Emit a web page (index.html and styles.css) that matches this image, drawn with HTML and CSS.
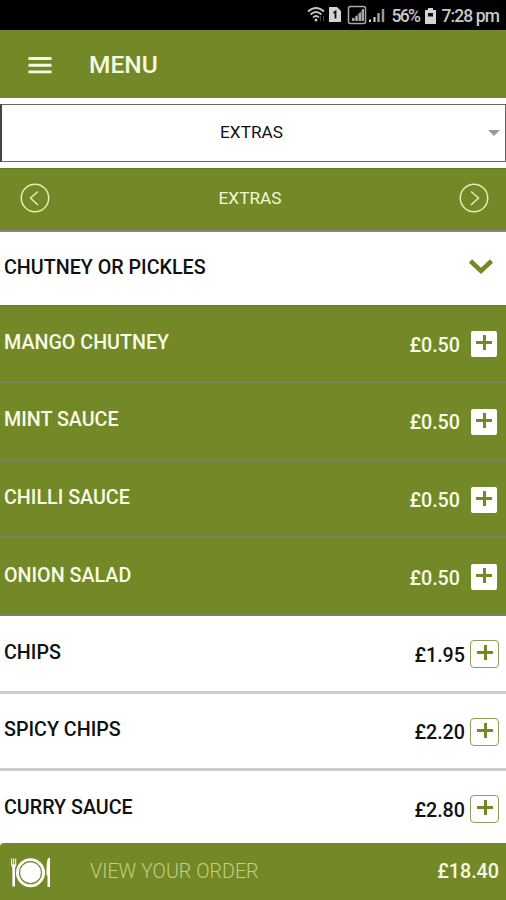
FILE: index.html
```html
<!DOCTYPE html>
<html lang="en">

<head>
    <meta charset="UTF-8">
    <meta name="viewport" content="width=device-width, initial-scale=1.0">
    <title>Menu</title>
    <link rel="stylesheet" href="styles.css">
</head>

<body>

    <div class="status-bar">
        <svg class="status-icons" width="79" height="22" viewBox="0 0 79 22">
            <!-- wifi -->
            <g fill="none" stroke="#c4c4c4" stroke-width="1.7">
                <path d="M1 7.5Q9 0.5 17 7.5"/>
                <path d="M3.5 10.5Q9 5.5 14.5 10.5"/>
                <path d="M6 13.5Q9 10.5 12 13.5"/>
            </g>
            <circle cx="9" cy="16" r="1.5" fill="#c4c4c4"/>
            <path d="M13.5 12v5M16.5 17v-5" fill="none" stroke="#444"/>
            <!-- sim -->
            <path d="M22 3h8l4 4v11h-12z" fill="#d4d4d4"/>
            <path d="M26.5 9l2-1.5v7" fill="none" stroke="#111" stroke-width="1.8"/>
            <!-- signal -->
            <rect x="41.5" y="2.5" width="17" height="17" rx="2" fill="none" stroke="#aaa" stroke-width="1.5"/>
            <path d="M44 17l12-12v12z" fill="#555"/>
            <path d="M46 17v-3M49.5 17v-5M53 17v-8M56 17v-12" stroke="#b5b5b5" stroke-width="1.8"/>
            <path d="M63 18v-2.5M67.5 18v-5" stroke="#d4d4d4" stroke-width="2"/>
            <path d="M71.5 18v-9M76 18v-13" stroke="#999" stroke-width="2.5"/>
        </svg>
        <span class="battery-text">56%</span>
        <svg class="battery" width="11" height="16" viewBox="0 0 11 16">
            <path d="M3 0h5v2h3v14h-11v-14h3z" fill="#d4d4d4"/>
            <path d="M3 5h5v3.5h-5z" fill="#111"/>
        </svg>
        <span class="clock">7:28 pm</span>
    </div>

    <header class="app-bar">
        <svg class="menu-icon" width="24" height="18" viewBox="0 0 24 18">
            <path d="M0.5 2.5h23M0.5 9.2h23M0.5 15.9h23" stroke="#f6f9e2" stroke-width="2.9"/>
        </svg>
        <h1>MENU</h1>
    </header>

    <div class="category-select">
        <span>EXTRAS</span>
        <i class="caret"></i>
    </div>

    <nav class="category-nav">
        <svg width="30" height="30" viewBox="0 0 30 30">
            <circle cx="15" cy="15" r="13.7"/>
            <path d="M18 8.5L10.5 15l7.5 7"/>
        </svg>
        <span>EXTRAS</span>
        <svg width="30" height="30" viewBox="0 0 30 30">
            <circle cx="15" cy="15" r="13.7"/>
            <path d="M12 8.5L19.5 15l-7.5 7"/>
        </svg>
    </nav>

    <div class="group-title">
        <h2>CHUTNEY OR PICKLES</h2>
        <svg width="26" height="18" viewBox="0 0 26 18">
            <path d="M2.5 2L13 12 23.5 2" fill="none" stroke="#738826" stroke-width="4.5"/>
        </svg>
    </div>

    <ul class="items">
        <li class="item option">
            <span class="name">MANGO CHUTNEY</span>
            <span class="price">£0.50</span>
            <button class="add" aria-label="Add"></button>
        </li>
        <li class="item option">
            <span class="name">MINT SAUCE</span>
            <span class="price">£0.50</span>
            <button class="add" aria-label="Add"></button>
        </li>
        <li class="item option">
            <span class="name">CHILLI SAUCE</span>
            <span class="price">£0.50</span>
            <button class="add" aria-label="Add"></button>
        </li>
        <li class="item option">
            <span class="name">ONION SALAD</span>
            <span class="price">£0.50</span>
            <button class="add" aria-label="Add"></button>
        </li>
        <li class="item">
            <span class="name">CHIPS</span>
            <span class="price">£1.95</span>
            <button class="add" aria-label="Add"></button>
        </li>
        <li class="item">
            <span class="name">SPICY CHIPS</span>
            <span class="price">£2.20</span>
            <button class="add" aria-label="Add"></button>
        </li>
        <li class="item">
            <span class="name">CURRY SAUCE</span>
            <span class="price">£2.80</span>
            <button class="add" aria-label="Add"></button>
        </li>
    </ul>

    <footer class="order-bar">
        <svg width="42" height="32" viewBox="0 0 42 32">
            <!-- fork -->
            <path d="M1.7 1.5v7M3.7 1.5v7M5.7 1.5v7" stroke="#fff" stroke-width="1"/>
            <path d="M1.2 7.5h5l-1.2 4v18h-2.6v-18z" fill="#fff"/>
            <!-- plate -->
            <circle cx="20.5" cy="15.7" r="14.5" fill="#fff"/>
            <circle cx="20.5" cy="15.7" r="11" fill="none" stroke="#738826" stroke-width="1.2"/>
            <!-- knife -->
            <path d="M40 1v29h-2.5v-11l-1-1c0-7 0-13 1.5-17z" fill="#fff"/>
        </svg>
        <span class="order-label">VIEW YOUR ORDER</span>
        <span class="total">£18.40</span>
    </footer>

</body>

</html>
```
FILE: styles.css
```css
* {
    box-sizing: border-box;
}

body {
    margin: 0;
    height: 900px;
    overflow: hidden;
    background-color: #fff;
    font-family: Roboto, Arial, sans-serif;
    font-size: 19.7px;
    font-weight: 500;
    color: #111;
}

h1,
h2 {
    margin: 0;
    font-weight: 500;
}

.status-bar {
    display: flex;
    justify-content: flex-end;
    align-items: center;
    height: 30px;
    padding: 2px 7px 0 0;
    background-color: #000;
    color: #c8c8c8;
    font-size: 17.5px;
    font-weight: 500;
    letter-spacing: -0.9px;
}

.status-icons {
    margin-top: -2px;
}

.battery-text {
    margin: 0 6px 0 5px;
    letter-spacing: -1.6px;
}

.clock {
    margin-left: 5px;
}

.app-bar {
    display: flex;
    align-items: center;
    height: 68px;
    padding: 1px 0 0 28px;
    background-color: #738826;
    color: #f6f9e2;
}

.app-bar h1 {
    margin-left: 37px;
    font-size: 24.5px;
    line-height: 28px;
}

.category-select {
    display: flex;
    justify-content: center;
    align-items: center;
    position: relative;
    height: 58px;
    margin: 6px 0;
    padding: 0 4px 3px 0;
    border: 1px solid #666;
    border-left: 2px solid #444;
    font-size: 17.2px;
    font-weight: 400;
}

.caret {
    position: absolute;
    right: 5px;
    top: 25px;
    border: 6px solid transparent;
    border-top-color: #999;
    border-bottom: none;
}

.category-nav {
    display: flex;
    align-items: center;
    height: 64px;
    padding: 0 17px 3px 20px;
    background-color: #738826;
    border-top: 1px solid #66772e;
    border-bottom: 2px solid #84887a;
    color: #f3f8d8;
    font-size: 17.2px;
    font-weight: 400;
}

.category-nav span {
    flex: 1;
    padding-right: 9px;
    text-align: center;
}

.category-nav svg {
    fill: none;
    stroke: #e3edb5;
    stroke-width: 1.5;
}

.group-title {
    display: flex;
    justify-content: space-between;
    align-items: center;
    height: 72.6px;
    padding: 0 12px 1px 4px;
}

.group-title h2 {
    font-size: 19.7px;
}

.items {
    margin: 0;
    padding: 0;
    list-style: none;
    border-top: 1px solid #66772e;
}

.item {
    display: flex;
    align-items: center;
    height: 77.6px;
    padding: 2px 7px 0 4px;
    border-bottom: 3px solid #ccc;
}

.item .name {
    flex: 1;
    padding-bottom: 4px;
}

.item .price {
    padding-top: 2px;
}

.add {
    position: relative;
    width: 29px;
    height: 28px;
    margin-left: 5px;
    padding: 0;
    background-color: #fff;
    border: 1px solid #8f9f55;
    border-radius: 4px;
}

/* plus sign */
.add::before,
.add::after {
    content: "";
    position: absolute;
    background-color: #738826;
}

.add::before {
    left: 6px;
    top: 10px;
    width: 16px;
    height: 3px;
}

.add::after {
    left: 12.5px;
    top: 4px;
    width: 3px;
    height: 15px;
}

.option {
    padding-right: 9px;
    background-color: #738826;
    border-bottom: 2px solid #788264;
    color: #f8fbe6;
}

.option .add {
    width: 26px;
    height: 26px;
    margin-left: 11px;
    border: none;
    border-radius: 2px;
}

.option .add::before {
    left: 5px;
}

.option .add::after {
    left: 11.5px;
}

.order-bar {
    display: flex;
    align-items: center;
    position: fixed;
    left: 0;
    right: 0;
    bottom: 0;
    height: 57px;
    padding: 0 7px 0 10px;
    background-color: #738826;
    border-radius: 4px 0 0 0;
    color: #f6f9e2;
}

.order-bar svg {
    margin-top: 2px;
}

.order-label {
    flex: 1;
    margin-left: 38px;
    color: #c3cf85;
    font-weight: 300;
}
```
